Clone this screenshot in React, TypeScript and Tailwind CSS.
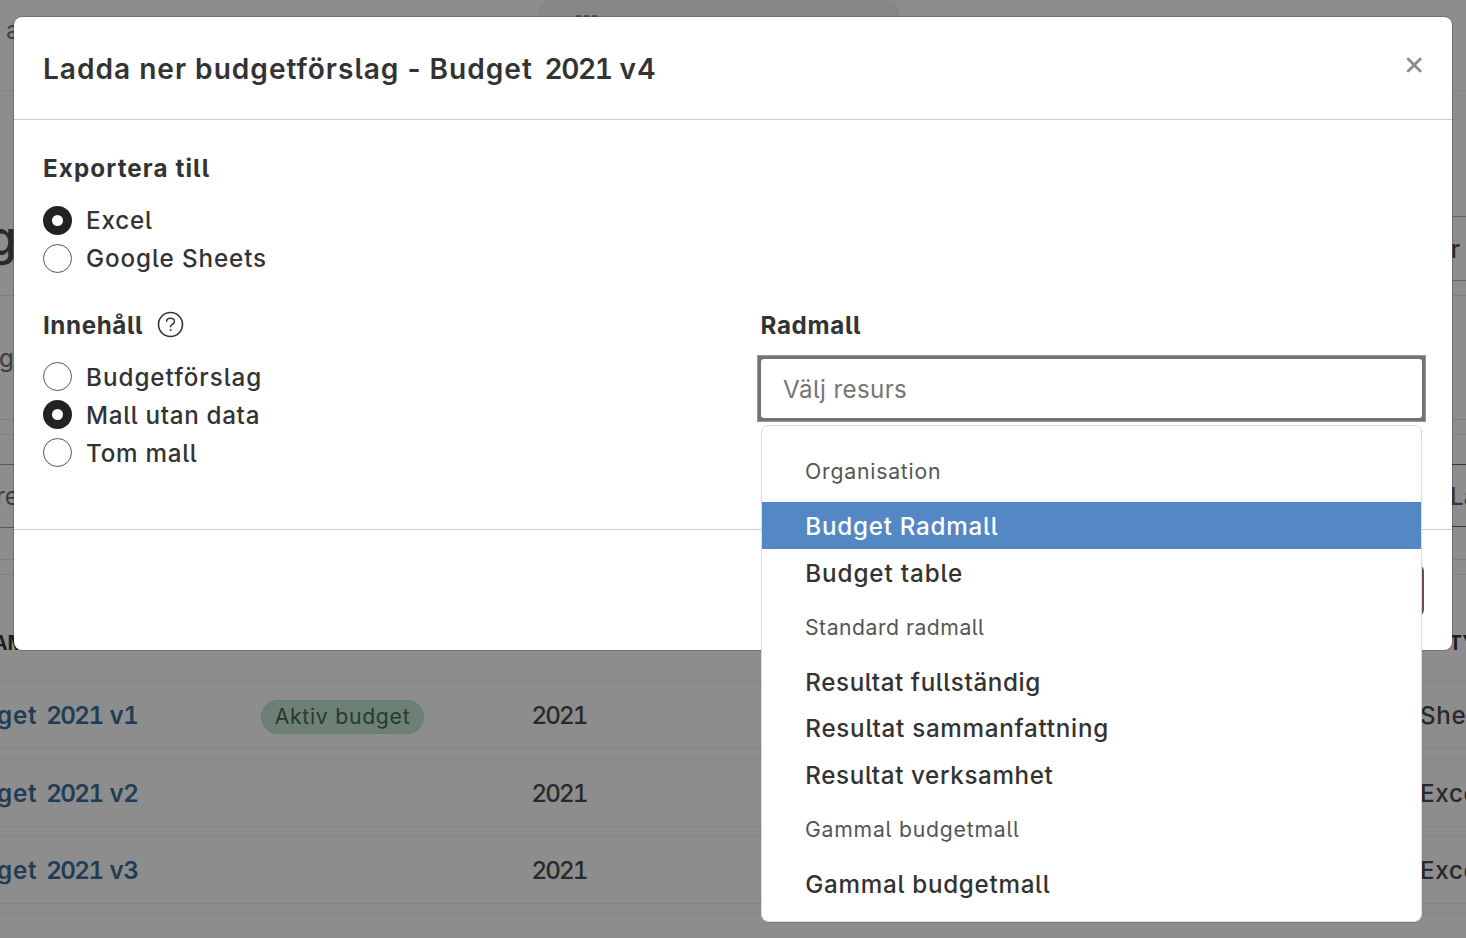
import type { ReactNode } from "react";

type Version = {
  suffix: string;
  year: string;
  format: string;
  active?: boolean;
  height: string;
};

const versions: Version[] = [
  { suffix: "v1", year: "2021", format: "Sheets", active: true, height: "h-[68px] pt-[2px]" },
  { suffix: "v2", year: "2021", format: "Excel", height: "h-[69px] pt-[3px]" },
  { suffix: "v3", year: "2021", format: "Excel", height: "h-[68px] pt-[2px]" },
];

function Digits({ children, tracking }: { children: ReactNode; tracking: string }) {
  return <span className={`tabular-nums ${tracking}`}>{children}</span>;
}

function VersionRow({ v }: { v: Version }) {
  return (
    <div className={`flex shrink-0 items-center border-y border-[#858585] text-[24.2px] ${v.height}`}>
      <span className="w-[261px] shrink-0 tracking-[0.8px]">
        <span className="-ml-[3px] font-semibold text-[#223c55]">
          get <Digits tracking="ml-[2px] tracking-[-1.6px]">2021</Digits> <Digits tracking="tracking-[-0.2px]">{v.suffix}</Digits>
        </span>
      </span>
      <div className="w-[270.5px] shrink-0 pt-0.5">
        {v.active && (
          <span className="flex h-[34px] w-[163px] items-center justify-center rounded-full border border-[#5f7f6d] bg-[#6e7f76] text-[21.2px] tracking-[0.73px] text-[#1f3d2a]">
            Aktiv budget
          </span>
        )}
      </div>
      <span className="w-[888.5px] shrink-0 font-medium text-[#292929]">
        <Digits tracking="tracking-[-1.9px]">{v.year}</Digits>
      </span>
      <span className="shrink-0 font-medium tracking-[0.7px] text-[#292929]">{v.format}</span>
    </div>
  );
}

function Page() {
  return (
    <div className="flex h-[938px] w-[1466px] flex-col overflow-hidden bg-[#8d8d8d] whitespace-nowrap text-[#292929]">
      <header className="flex h-[91px] shrink-0 items-start border-b border-[#848484]">
        <span className="w-[538px] pt-[16px] pl-[6px] text-[24.2px] leading-[30px] text-[#404040]">a</span>
        <div className="flex h-[60px] w-[362px] items-start gap-[3px] rounded-t-[14px] bg-[#878787] pt-[15px] pl-[38px]">
          <i className="size-[5px] bg-[#555]" />
          <i className="size-[5px] bg-[#555]" />
          <i className="size-[5px] bg-[#555]" />
        </div>
      </header>
      <section className="flex h-[204px] shrink-0 items-start justify-between pt-[125px]">
        <span className="-ml-[13px] text-[48px] leading-[44px] font-medium">g</span>
        <span className="flex h-[65px] w-[60px] items-center justify-end border-y border-[#666] pt-[3px] pr-[6px] text-[24.2px] font-medium">r</span>
      </section>
      <section className="flex h-[125px] shrink-0 items-center border-y border-[#808080] pt-[3px]">
        <span className="-ml-[1px] text-[24.2px] text-[#3c3c3c]">g</span>
      </section>
      <section className="mt-[14px] flex h-[126px] shrink-0 items-start justify-between border-y border-[#808080] pt-[29px]">
        <span className="flex h-[64px] w-[60px] items-center border-y border-[#5c5c5c] pt-[2px] text-[24.2px] text-[#3c3c3c]">
          <span className="-ml-[4px]">re</span>
        </span>
        <span className="flex h-[63px] w-[60px] items-center border-y border-[#383838] pt-[3px] pl-[44px] text-[24.2px] font-medium text-[#383838]">La</span>
      </section>
      <section className="mt-[14px] flex shrink-0 flex-col border-t border-[#808080]">
        <div className="flex h-[106px] items-start pt-[56px] text-[19.5px] leading-[24px] font-bold text-[#1f1f1f]">
          <span className="w-[1449px] shrink-0">
            <span className="-ml-[7px]">AMN</span>
          </span>
          <span>TYP</span>
        </div>
        <div className="flex flex-col gap-[9px]">
          {versions.map((v) => (
            <VersionRow key={v.suffix} v={v} />
          ))}
          <div className="h-[60px] border-t border-[#858585]" />
        </div>
      </section>
    </div>
  );
}

function Radio({ checked, children, tracking }: { checked?: boolean; children: ReactNode; tracking: string }) {
  return (
    <label className="flex h-[38px] items-center">
      {checked ? (
        <span className="flex size-[29px] items-center justify-center rounded-full bg-[#222]">
          <span className="size-[11px] rounded-full bg-white" />
        </span>
      ) : (
        <span className="size-[29px] rounded-full border border-[#555] bg-white" />
      )}
      <span className={`ml-[14px] text-[24.2px] font-medium ${tracking}`}>{children}</span>
    </label>
  );
}

function GroupLabel({ children, tracking }: { children: ReactNode; tracking: string }) {
  return (
    <li className={`h-[62px] pl-[43px] text-[21.2px] leading-[63px] text-[#555] ${tracking}`}>{children}</li>
  );
}

function Option({ active, children, tracking }: { active?: boolean; children: ReactNode; tracking: string }) {
  return (
    <li
      className={`h-[46.8px] pl-[43.3px] text-[24.2px] leading-[50px] font-medium ${tracking} ${
        active ? "bg-[#5488c5] text-white" : "text-[#333]"
      }`}
    >
      {children}
    </li>
  );
}

function TemplateMenu() {
  return (
    <ul className="absolute top-[69px] left-[3px] h-[497px] w-[661px] rounded-[7px] border border-[#dcdcdc] bg-white bg-clip-padding pt-[14px] shadow-[0_1px_1px_rgba(0,0,0,0.12)]">
      <GroupLabel tracking="tracking-[0.8px]">Organisation</GroupLabel>
      <Option active tracking="tracking-[0.75px]">Budget Radmall</Option>
      <Option tracking="tracking-[0.9px]">Budget table</Option>
      <GroupLabel tracking="tracking-[0.5px]">Standard radmall</GroupLabel>
      <Option tracking="tracking-[0.6px]">Resultat fullständig</Option>
      <Option tracking="tracking-[0.74px]">Resultat sammanfattning</Option>
      <Option tracking="tracking-[0.62px]">Resultat verksamhet</Option>
      <GroupLabel tracking="tracking-[0.78px]">Gammal budgetmall</GroupLabel>
      <Option tracking="tracking-[0.72px]">Gammal budgetmall</Option>
    </ul>
  );
}

function Modal() {
  return (
    <div className="absolute top-[17px] left-[14px] flex h-[633px] w-[1438px] flex-col rounded-[8px] bg-white text-[#333] shadow-[0_0_0_1px_rgba(0,0,0,0.2)]">
      <header className="flex h-[103px] shrink-0 items-center justify-between border-b border-[#ccc] pr-[30px] pl-[29px]">
        <h1 className="pt-[2px] text-[28.1px] leading-[40px] font-semibold tracking-[0.98px]">
          Ladda ner budgetförslag - Budget <Digits tracking="ml-[3.5px] tracking-[-1.4px]">2021</Digits> v4
        </h1>
        <button className="mb-[7px] flex size-[16px] items-center justify-center" aria-label="Stäng">
          <svg width="16" height="16" viewBox="0 0 16 16" fill="none" stroke="#8c8c8c" strokeWidth="2.8" strokeLinecap="round">
            <path d="M2.2 2l12 12M14.2 2l-12 12" />
          </svg>
        </button>
      </header>

      <div className="flex h-[410px] shrink-0 flex-col border-b border-[#ccc] pl-[29px]">
        <h2 className="mt-[28px] h-[40px] text-[24.2px] leading-[42px] font-bold tracking-[1.1px]">Exportera till</h2>
        <div className="mt-[13px]">
          <Radio checked tracking="pt-[2px] leading-[36px] tracking-[0.8px]">Excel</Radio>
          <Radio tracking="pt-[2px] leading-[36px] tracking-[0.92px]">Google Sheets</Radio>
        </div>

        <div className="mt-[27px] flex">
          <div className="w-[715px]">
            <h2 className="flex h-[40px] items-center pt-[3px] text-[24.2px] leading-[37px] font-bold tracking-[0.58px]">
              Innehåll
              <svg className="mb-[3px] ml-[14px]" width="27" height="27" viewBox="0 0 27 27" fill="none" stroke="#333" strokeLinecap="round">
                <circle cx="13.5" cy="13.5" r="12" strokeWidth="1.6" />
                <path d="M9.6 10.4c.1-2 1.6-3.1 3.8-3.1 2.3 0 4 1.2 4 3.1 0 1.6-.9 2.3-2.1 2.9-1.2.6-1.8 1-1.8 2.1v.3" strokeWidth="1.4" />
                <circle cx="13.5" cy="19" r="0.6" fill="#333" strokeWidth="0.8" />
              </svg>
            </h2>
            <div className="mt-[13px]">
              <Radio tracking="pt-[4px] leading-[36px] tracking-[1px]">Budgetförslag</Radio>
              <Radio checked tracking="pt-[4px] leading-[36px] tracking-[0.68px]">Mall utan data</Radio>
              <Radio tracking="pt-[4px] leading-[36px] tracking-[0.75px]">Tom mall</Radio>
            </div>
          </div>

          <div className="-ml-px w-[669px]">
            <h2 className="ml-[3.5px] h-[40px] text-[24.2px] leading-[43px] font-bold tracking-[0.65px]">Radmall</h2>
            <div className="relative mt-[11px] h-[67px] w-[669px] border border-[#999] bg-[#737373] p-[3px]">
              <div className="flex h-full items-center rounded-[3px] bg-white pt-[3px] pl-[22px] text-[24.2px] tracking-[0.35px] text-[#757575]">
                Välj resurs
              </div>
              <TemplateMenu />
            </div>
          </div>
        </div>
      </div>

      <footer className="flex flex-1 items-start justify-end pt-[35px] pr-[28px]">
        <div className="h-[51px] w-[120px] rounded-[6px] bg-[#6f4a66]" />
      </footer>
    </div>
  );
}

export default function App() {
  return (
    <div className="relative h-[938px] w-[1466px] overflow-hidden font-['Inter',sans-serif] [font-feature-settings:'cv05']">
      <Page />
      <Modal />
    </div>
  );
}
